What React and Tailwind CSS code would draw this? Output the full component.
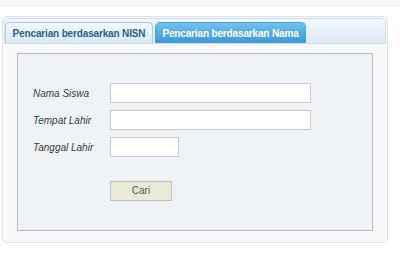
import React from 'react';

const Field = ({ label, width }) => (
  <div className="flex items-center">
    <label className="w-[77px] text-[10px] italic text-[#3a3a3a]" style={{ fontFamily: '"Liberation Sans", Arial, sans-serif' }}>
      {label}
    </label>
    <input
      type="text"
      className={`${width} h-[20px] border border-[#c9cdd3] bg-white outline-none`}
    />
  </div>
);

export default function App() {
  return (
    <div className="h-[260px] w-[400px] bg-white" style={{ fontFamily: '"Liberation Sans", Arial, sans-serif' }}>
      <div className="h-[7px] bg-[#f3f7fa]" />

      {/* outer panel */}
      <div className="ml-[2px] mt-[9px] h-[227px] w-[386px] rounded-[5px] border border-[#dde3e9] bg-[#f6f8fa] p-[1px]">
        {/* tab strip */}
        <div className="flex h-[26px] items-end gap-[2px] rounded-t-[5px] border border-[#cfdeec] bg-gradient-to-b from-[#f1f7fc] to-[#dfebf6] pl-0">
          <div className="flex h-[21px] w-[148px] items-center justify-center rounded-t-[5px] border border-b-0 border-[#abcde7] bg-gradient-to-b from-[#f3f9fd] to-[#d9eaf7] text-[10px] font-bold tracking-[-0.15px] text-[#2b5f8e]">
            Pencarian berdasarkan NISN
          </div>
          <div className="flex h-[21px] w-[151px] items-center justify-center rounded-t-[5px] border border-b-0 border-[#4ea3dc] bg-gradient-to-b from-[#71c2ee] to-[#3b98d6] text-[10px] font-bold tracking-[-0.15px] text-white">
            Pencarian berdasarkan Nama
          </div>
        </div>

        {/* form box */}
        <div className="ml-[13px] mt-[9px] h-[178px] w-[356px] border border-[#b7bcc3] bg-[#eff3f7] pl-[15px] pt-[29px]">
          <div className="flex flex-col gap-[7px]">
            <Field label="Nama Siswa" width="w-[201px]" />
            <Field label="Tempat Lahir" width="w-[201px]" />
            <Field label="Tanggal Lahir" width="w-[69px]" />
          </div>
          <div className="mt-[20px] pl-[77px]">
            <button className="h-[20px] w-[62px] border border-[#c8c5b6] bg-[#ece9d9] text-[10px] text-[#555]">
              Cari
            </button>
          </div>
        </div>
      </div>
    </div>
  );
}
